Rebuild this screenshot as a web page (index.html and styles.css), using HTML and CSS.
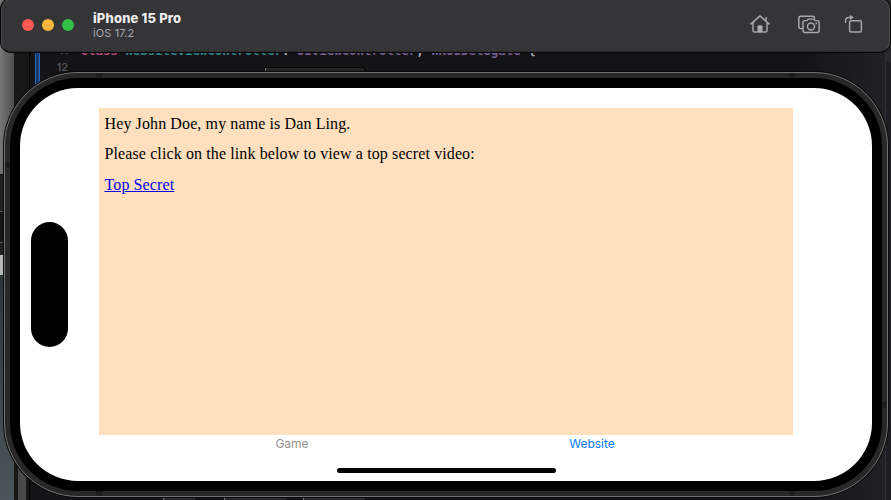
FILE: index.html
```
<!DOCTYPE html>
<html lang="en">
<head>
<meta charset="utf-8">
<title>iPhone 15 Pro</title>
<link rel="stylesheet" href="styles.css">
</head>
<body>
<div class="desktop">
  <div class="backdrop">
    <div class="wallpaper">
      <div class="strip strip-top"></div>
      <div class="strip strip-row"></div>
      <div class="strip strip-row short"></div>
      <div class="strip strip-gap"></div>
      <div class="strip strip-light"></div>
      <div class="strip strip-bottom"></div>
    </div>
    <div class="gutter"></div>
    <div class="editor">
      <div class="change-bar"></div>
      <div class="line"><span class="num">11</span><code><b class="kw">class</b> <span class="type">WebsiteViewController</span>: <span class="base">UIViewController</span>, <span class="base">WKUIDelegate</span> {</code></div>
      <div class="line last"><span class="num">12</span></div>
      <div class="popover"></div>
      <div class="footer-chips"><i></i><i></i><i></i></div>
    </div>
    <div class="right-rail"></div>
  </div>

  <div class="phone">
    <i class="antenna top-left"></i><i class="antenna top-right"></i>
    <i class="antenna bottom-left"></i><i class="antenna bottom-right"></i>
    <i class="antenna side-left"></i><i class="antenna side-right"></i>
    <div class="bezel">
      <div class="screen">
        <div class="island"></div>
        <main class="web">
          <p>Hey John Doe, my name is Dan Ling.</p>
          <p>Please click on the link below to view a top secret video:</p>
          <p><a href="#">Top Secret</a></p>
        </main>
        <nav class="tabs">
          <span class="tab game">Game</span>
          <span class="tab active">Website</span>
        </nav>
        <div class="home-indicator"></div>
      </div>
    </div>
  </div>

  <header class="titlebar">
    <div class="lights"><i class="red"></i><i class="yellow"></i><i class="green"></i></div>
    <div class="device"><strong>iPhone 15 Pro</strong><span>iOS 17.2</span></div>
    <div class="actions">
      <svg width="22" height="20" viewBox="0 0 22 20">
        <path d="M1.8 10.1 11 1.9l9.2 8.2M4 8.6v8.2q0 1.1 1.1 1.1h11.8q1.1 0 1.1-1.1V8.6M17.1 7V3.5"/>
        <path class="solid" d="M8.5 18v-5.8q0-1 1-1h3q1 0 1 1V18z"/>
      </svg>
      <svg width="24" height="20" viewBox="0 0 24 20">
        <path d="M5.2 14.6H3.8q-2 0-2-2V4.2q0-2 2-2h11.7q2 0 2 2"/>
        <path d="M8 6.6h2l1.2-1.5h5.6L18 6.6h2.2q2 0 2 2v7.8q0 2-2 2H8q-2 0-2-2V8.6q0-2 2-2z"/>
        <circle cx="14" cy="12.4" r="3.5"/>
        <circle class="solid" cx="19.3" cy="9.4" r=".9"/>
      </svg>
      <svg width="20" height="20" viewBox="0 0 20 20">
        <rect x="6.6" y="6.7" width="11.8" height="11.4" rx="1.5"/>
        <path d="M2.6 8.2V6.6q0-3.2 3.2-3.2h2"/>
        <path class="solid" d="m7 .8 3.6 2.6L7 6z"/>
      </svg>
    </div>
  </header>
</div>
</body>
</html>
```
FILE: styles.css
```
* { box-sizing: border-box; }
body { margin: 0; background: #151518; }
.desktop {
  position: relative;
  width: 891px;
  height: 500px;
  overflow: hidden;
  font-family: Inter, "Liberation Sans", sans-serif;
}

/* windows behind the simulator */
.backdrop { display: flex; height: 500px; }
.wallpaper { width: 14px; display: flex; flex-direction: column; background: #343a3e; }
.strip { width: 100%; }
.strip-top { height: 175px; background: linear-gradient(90deg, #777, #4d4d4d); border-bottom: 1px solid #111; }
.strip-row { height: 37px; background: #202020; border-bottom: 1px solid #555; }
.strip-row.short { height: 31px; background: #171717; }
.strip-gap { height: 12px; background: #222; }
.strip-light { height: 20px; background: #b6b6b6; }
.strip-bottom { flex: 1; background: linear-gradient(#2f363a, #4b555b); }
.gutter {
  display: flex;
  align-items: flex-end;
  width: 16px;
  padding-left: 4px;
  background: #171717;
  border-right: 1px solid #000;
}
.gutter::after {
  content: "";
  width: 8px;
  height: 40px;
  background: #484848;
}
.editor { position: relative; flex: 1; background: linear-gradient(90deg, #141416 90%, #202025); padding-top: 42px; }
.change-bar { position: absolute; left: 5px; top: 0; width: 5px; height: 100px; background: #173b70; border: solid #2865b8; border-width: 0 1px; }
.line { display: flex; height: 17px; font: bold 12.4px/18px "DejaVu Sans Mono", monospace; color: #a6a6ab; }
.last { height: 18px; }
.num { width: 38px; margin-right: 12.5px; text-align: right; font: 500 11px/17px Inter, sans-serif; color: #59595d; }
code { font: inherit; white-space: pre; }
.kw { color: #b84a7e; }
.type { color: #368192; }
.base { color: #755f98; }
.popover { position: absolute; left: 234px; top: 67px; width: 101px; height: 12px; background: #242424; border: solid #050505; border-width: 1px 1px 0; box-shadow: inset 1px 0 #666; }
.footer-chips { position: absolute; left: 133px; bottom: 0; display: flex; height: 3px; }
.footer-chips i { width: 32px; background: #2a2a2c; border-left: 1px solid #77777a; }
.footer-chips i + i { width: 62px; margin-left: 29px; }
.footer-chips i + i + i { margin-left: 17px; }
.right-rail { width: 6px; background: linear-gradient(#28282b 0 62px, #1d1d22 62px); border-left: 1px solid #303036; }

/* device */
.phone {
  position: absolute;
  left: 4px;
  top: 72px;
  width: 884px;
  height: 425px;
  padding: 5px;
  background: #282828;
  border: 1px solid #737373;
  border-radius: 74px;
  box-shadow: 0 0 0 1px #0b0b0b;
}
.bezel { height: 413px; padding: 10px; background: #000; border-radius: 68px; }
.screen {
  position: relative;
  display: flex;
  flex-direction: column;
  width: 852px;
  height: 393px;
  padding: 20px 79px 0;
  overflow: hidden;
  background: #fff;
  border-radius: 58px;
}
.island { position: absolute; left: 11px; top: 134px; width: 37px; height: 125px; border-radius: 19px; background: #000; }
.web {
  width: 694px;
  height: 327px;
  padding: 7px 5.5px;
  background: #fedfbe;
  color: #000;
  font: 16px/18px "Liberation Serif", serif;
  letter-spacing: .11px;
}
.web p { margin: 0 0 12.4px; }
.web a { color: #0000ee; }
.tabs { display: flex; width: 694px; height: 18px; font-size: 12px; line-height: 18px; color: #929292; }
.tab { width: 300px; text-align: center; }
.game { margin-left: 43px; }
.active { color: #087aff; }
.home-indicator { position: absolute; left: 317px; top: 380px; width: 219px; height: 5px; border-radius: 3px; background: #000; }
.antenna { position: absolute; background: #1d1d1d; }
.top-left, .bottom-left { left: 91px; width: 6px; height: 5px; }
.top-right, .bottom-right { left: 784px; width: 6px; height: 5px; }
.top-left, .top-right { top: 0; }
.bottom-left, .bottom-right { bottom: 0; }
.side-left { left: 0; top: 89px; width: 5px; height: 6px; }
.side-right { right: 0; top: 329px; width: 5px; height: 6px; }

/* simulator window bar */
.titlebar {
  position: absolute;
  left: 1px;
  top: -1px;
  width: 889px;
  height: 53px;
  display: flex;
  align-items: center;
  padding: 0 26px 2px 20px;
  background: #353538;
  border: 1px solid #4b4b4e;
  border-bottom-color: #29292b;
  border-radius: 10px;
  box-shadow: 0 0 0 1px #080808;
}
.lights { display: flex; gap: 8px; }
.lights i { width: 12px; height: 12px; border-radius: 50%; }
.red { background: #ff5a52; }
.yellow { background: #ffb83f; }
.green { background: #32c146; }
.device { display: flex; flex-direction: column; margin-left: 19px; color: #a8a8ab; font-size: 11px; line-height: 14px; letter-spacing: .12px; }
.device strong { color: #eeeeef; font-size: 13px; line-height: 16px; font-weight: 800; letter-spacing: .17px; }
.actions { display: flex; gap: 22px; margin: -2px 0 0 auto; }
.actions svg:first-child { margin-right: 4px; }
.actions svg { fill: none; stroke: #a9a9ac; stroke-width: 1.45; stroke-linecap: round; stroke-linejoin: round; }
.actions .solid { fill: #a9a9ac; stroke: none; }
```
